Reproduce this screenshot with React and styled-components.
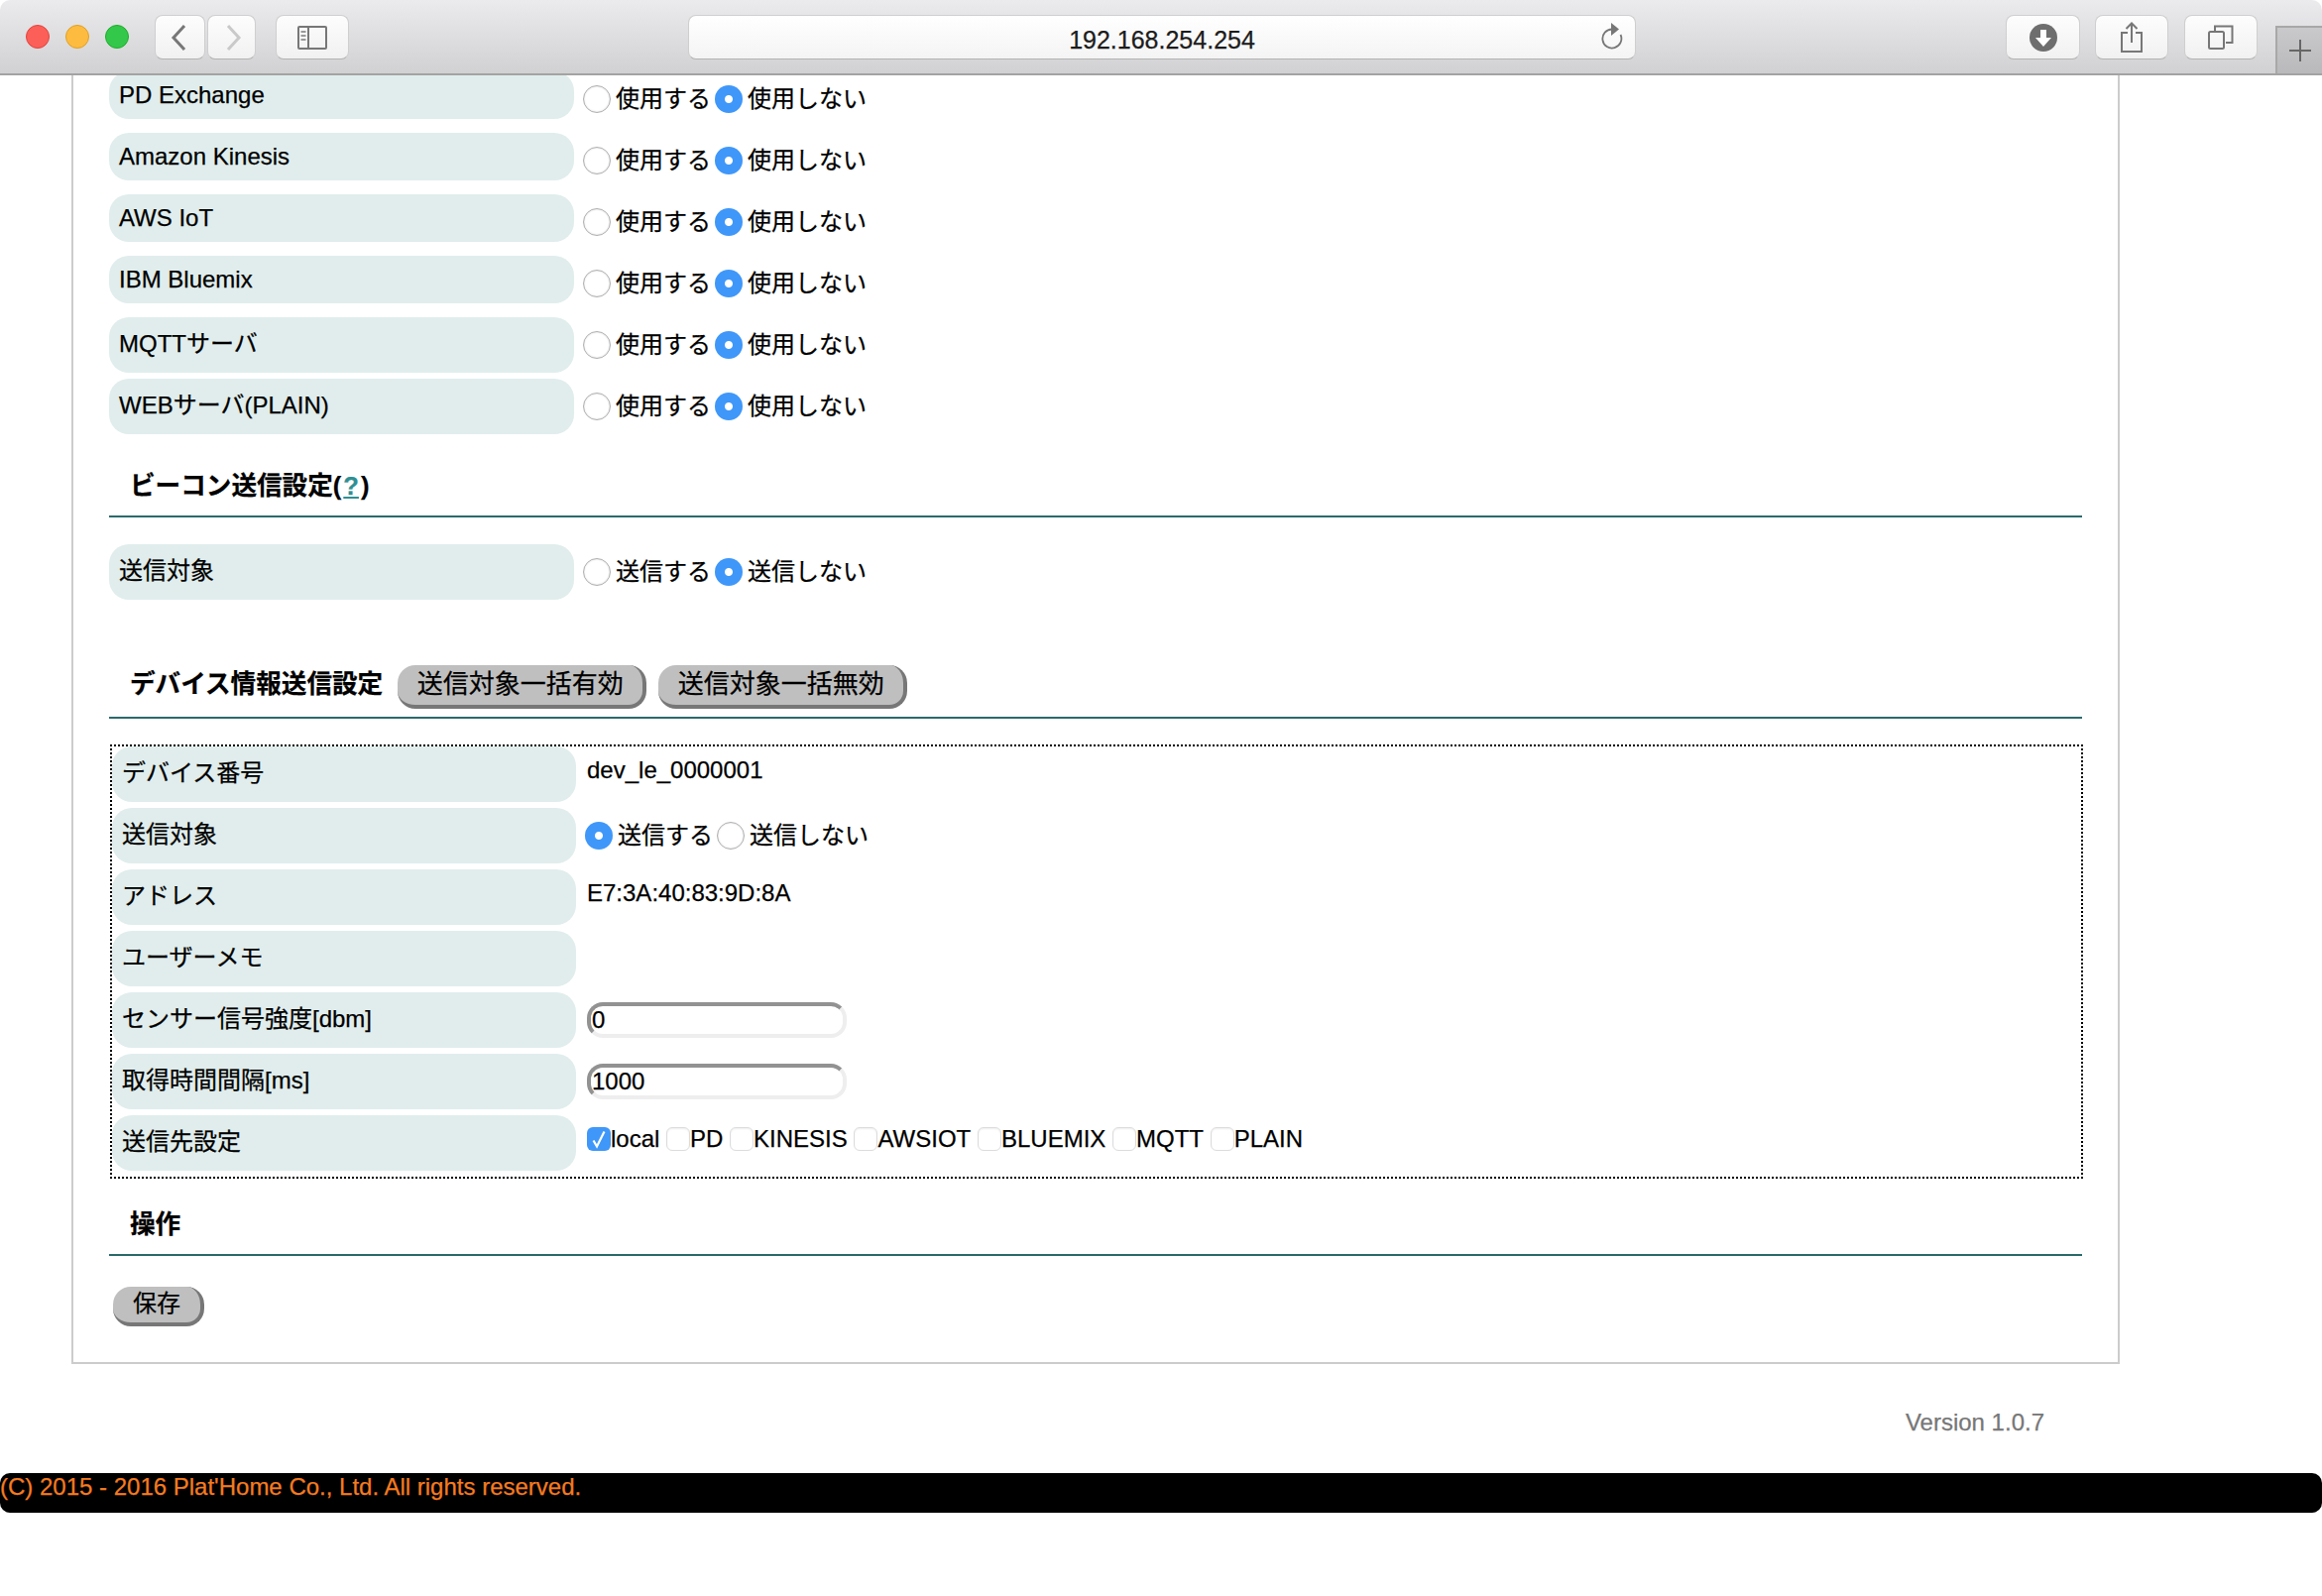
import React from 'react'
import styled, { createGlobalStyle } from 'styled-components'

const GlobalStyle = createGlobalStyle`
  html, body {
    margin: 0;
    padding: 0;
    background: #fff;
    font-family: "Liberation Sans", "Noto Sans CJK JP", sans-serif;
    font-size: 24px;
    color: #000;
    -webkit-text-stroke: 0.25px currentColor;
  }
`

const Window = styled.div`
  width: 2342px;
  height: 1610px;
  overflow: hidden;
  display: flex;
  flex-direction: column;
`

const TitleBar = styled.div`
  flex: none;
  box-sizing: border-box;
  height: 76px;
  border-bottom: 2px solid #a3a3a3;
  border-radius: 10px 10px 0 0;
  background: linear-gradient(#ebebed, #d1d1d3);
  display: flex;
  align-items: flex-start;
  padding: 15px 0 0 26px;
  position: relative;
  z-index: 1;
`

const Lights = styled.div`
  display: flex;
  gap: 16px;
  margin: 10px 26px 0 0;
`

const Light = styled.span`
  width: 24px;
  height: 24px;
  border-radius: 50%;
  box-sizing: border-box;
  background: ${(p) => p.$color};
  border: 1px solid ${(p) => p.$edge};
`

const BarButton = styled.div`
  flex: none;
  box-sizing: border-box;
  width: ${(p) => p.$w}px;
  height: 45px;
  margin-left: ${(p) => p.$ml || 0}px;
  border: 1px solid #cfcfd0;
  border-bottom-color: #b3b3b3;
  border-radius: 8px;
  background: linear-gradient(#fdfdfd, #f1f1f1);
  display: flex;
  align-items: center;
  justify-content: center;
`

const UrlBar = styled.div`
  flex: none;
  box-sizing: border-box;
  width: 956px;
  height: 45px;
  margin-left: 342px;
  border: 1px solid #cfcfd0;
  border-bottom-color: #b3b3b3;
  border-radius: 8px;
  background: linear-gradient(#ffffff, #f4f4f4);
  position: relative;
  text-align: center;
  line-height: 48px;
  font-size: 25px;
  color: #1c1c1c;
`

const ReloadIcon = styled.svg`
  position: absolute;
  right: 12px;
  top: 7px;
`

const NewTab = styled.div`
  position: absolute;
  right: 0;
  top: 26px;
  box-sizing: border-box;
  width: 47px;
  height: 48px;
  border: solid #a8a8a8;
  border-width: 2px 0 0 2px;
  background: linear-gradient(#c9c9cb, #b9b9bb);
  display: flex;
  align-items: center;
  justify-content: center;
`

const Page = styled.main`
  flex: 1;
  min-height: 0;
  overflow: hidden;
`

const Box = styled.div`
  box-sizing: border-box;
  width: 2066px;
  height: 1304px;
  margin: -4px 0 0 72px;
  padding: 0 36px;
  border: solid #cccccc;
  border-width: 0 2px 2px 2px;
`

const Row = styled.div`
  display: flex;
  align-items: flex-start;
  height: 62px;
`

const Label = styled.div`
  flex: none;
  box-sizing: border-box;
  width: ${(p) => p.$w || 469}px;
  height: ${(p) => p.$h || 56}px;
  padding: ${(p) => (p.$h === 48 ? 8 : 11)}px 0 0 10px;
  border-radius: 20px;
  background: #e0edec;
  line-height: 32px;
`

const Cell = styled.div`
  display: flex;
  align-items: center;
  height: 28px;
  margin: 14px 0 0 9px;
  white-space: nowrap;
`

const Radio = styled.span`
  flex: none;
  box-sizing: border-box;
  width: 28px;
  height: 28px;
  border-radius: 50%;
  margin-right: ${(p) => p.$mr}px;
  ${(p) =>
    p.$on
      ? `background: radial-gradient(circle, #fff 0 3.5px, #3f97f9 4.5px);`
      : `background: #fff; border: 1px solid #b0b0b0; box-shadow: inset 0 0 2px #ccc;`}
`

const Choice = styled.span`
  margin-right: ${(p) => p.$mr || 0}px;
  line-height: 28px;
`

const Heading = styled.h2`
  display: flex;
  align-items: flex-start;
  box-sizing: border-box;
  height: ${(p) => p.$h}px;
  margin: ${(p) => p.$mt}px 0 ${(p) => p.$mb}px;
  padding: ${(p) => p.$pt}px 0 0 21px;
  border-bottom: 2px solid #2b6a6b;
  font-size: 25.6px;
  font-weight: 700;
  line-height: 32px;
  white-space: nowrap;
`

const HeadingText = styled.span`
  margin-top: ${(p) => p.$mt || 0}px;
`

const Help = styled.a`
  color: #2f8f93;
  text-decoration: underline;
  margin: 0 2px;
`

const PillButton = styled.button`
  flex: none;
  box-sizing: border-box;
  height: ${(p) => p.$h}px;
  padding: 0 ${(p) => p.$px}px 2px;
  margin-left: ${(p) => p.$ml || 0}px;
  border: solid #777777;
  border-width: 0 4px 4px 0;
  border-radius: 18px;
  background: #bfbfbf;
  color: #000;
  font: inherit;
  font-size: ${(p) => p.$fs}px;
  font-weight: 400;
  line-height: 32px;
`

const Dotted = styled.div`
  box-sizing: border-box;
  width: 1990px;
  height: 438px;
  margin-left: 1px;
  border: 2px dotted #000;
`

const Value = styled.div`
  margin: 8px 0 0 11px;
  line-height: 32px;
`

const FieldInput = styled.input`
  box-sizing: border-box;
  width: 262px;
  height: 36px;
  margin: 10px 0 0 11px;
  padding: 0 2px 0 1px;
  border: 4px solid;
  border-color: #929292 #eeeeee #eeeeee #929292;
  border-radius: 16px;
  outline: none;
  background: #fff;
  color: #000;
  font: inherit;
`

const Boxes = styled.div`
  display: flex;
  align-items: center;
  height: 24px;
  margin: 12px 0 0 11px;
  white-space: nowrap;
`

const CheckBox = styled.span`
  flex: none;
  box-sizing: border-box;
  width: 24px;
  height: 24px;
  border-radius: 6px;
  display: flex;
  align-items: center;
  justify-content: center;
  ${(p) =>
    p.$on
      ? `background: #3f97f9;`
      : `background: #fff; border: 1px solid #dcdcdc; box-shadow: inset 0 1px 2px #eee;`}
`

const BoxText = styled.span`
  margin-right: 6.7px;
  line-height: 28px;
`

const Version = styled.div`
  width: 2062px;
  margin-top: 43px;
  text-align: right;
  color: #777777;
  line-height: 32px;
`

const Footer = styled.footer`
  box-sizing: border-box;
  height: 40px;
  margin-top: 35px;
  border-radius: 10px;
  background: #000;
  color: #f47b20;
  line-height: 28px;
`

const services = [
  { name: 'PD Exchange', h: 48 },
  { name: 'Amazon Kinesis', h: 48 },
  { name: 'AWS IoT', h: 48 },
  { name: 'IBM Bluemix', h: 48 },
  { name: 'MQTTサーバ', h: 56 },
  { name: 'WEBサーバ(PLAIN)', h: 56 },
]

const targets = [
  { name: 'local', on: true },
  { name: 'PD' },
  { name: 'KINESIS' },
  { name: 'AWSIOT' },
  { name: 'BLUEMIX' },
  { name: 'MQTT' },
  { name: 'PLAIN' },
]

const Pair = ({ yes, no, first }) => (
  <Cell>
    <Radio $on={first} $mr={5} />
    <Choice $mr={4}>{yes}</Choice>
    <Radio $on={!first} $mr={5} />
    <Choice>{no}</Choice>
  </Cell>
)

const App = () => (
  <Window>
    <GlobalStyle />
    <TitleBar>
      <Lights>
        <Light $color="#fc5f57" $edge="#e0443e" />
        <Light $color="#fdbc40" $edge="#dfa023" />
        <Light $color="#34c84a" $edge="#1dad2b" />
      </Lights>
      <BarButton $w={51}>
        <svg width="16" height="26" viewBox="0 0 16 26" fill="none" stroke="#777" strokeWidth="3" style={{ marginRight: 4 }}>
          <path d="M14 1L3 13l11 12" />
        </svg>
      </BarButton>
      <BarButton $w={49} $ml={2}>
        <svg width="16" height="26" viewBox="0 0 16 26" fill="none" stroke="#c9c9c9" strokeWidth="3" style={{ marginLeft: 4 }}>
          <path d="M2 1l11 12L2 25" />
        </svg>
      </BarButton>
      <BarButton $w={74} $ml={20}>
        <svg width="30" height="24" viewBox="0 0 30 24" fill="none" stroke="#777" strokeWidth="2">
          <rect x="1" y="1" width="28" height="22" rx="1" />
          <path d="M11 1v22" />
          <path d="M3.5 6h5M3.5 10h5M3.5 14h5" strokeWidth="1.8" stroke="#999" />
        </svg>
      </BarButton>
      <UrlBar>
        192.168.254.254
        <ReloadIcon width="24" height="30" viewBox="0 0 24 30" fill="none">
          <path d="M13 6.5a9.5 9.5 0 1 0 8.5 5.5" stroke="#777" strokeWidth="1.8" />
          <path d="M12 0l8 6.5-8 6.5z" fill="#777" />
        </ReloadIcon>
      </UrlBar>
      <BarButton $w={75} $ml={373}>
        <svg width="28" height="28" viewBox="0 0 28 28">
          <circle cx="14" cy="14" r="14" fill="#6e6e6e" />
          <path d="M11 6h6v8h5l-8 9-8-9h5z" fill="#fff" />
        </svg>
      </BarButton>
      <BarButton $w={74} $ml={15}>
        <svg width="24" height="32" viewBox="0 0 24 32" fill="none" stroke="#777" strokeWidth="2">
          <path d="M8 11H2v19h20V11h-6" />
          <path d="M12 21V2M6.5 7L12 1.5 17.5 7" />
        </svg>
      </BarButton>
      <BarButton $w={74} $ml={16}>
        <svg width="26" height="26" viewBox="0 0 26 26" fill="none" stroke="#777" strokeWidth="2">
          <rect x="1" y="7" width="15" height="17" rx="1.5" />
          <path d="M7 6V1.5h17.5V18H18" />
        </svg>
      </BarButton>
      <NewTab>
        <svg width="24" height="24" viewBox="0 0 24 24" stroke="#666" strokeWidth="2">
          <path d="M12 1v22M1 12h22" />
        </svg>
      </NewTab>
    </TitleBar>
    <Page>
      <Box>
        {services.map((s) => (
          <Row key={s.name}>
            <Label $h={s.h}>{s.name}</Label>
            <Pair yes="使用する" no="使用しない" />
          </Row>
        ))}
        <Heading $h={78} $mt={0} $mb={27} $pt={30}>
          ビーコン送信設定(<Help>?</Help>)
        </Heading>
        <Row>
          <Label>送信対象</Label>
          <Pair yes="送信する" no="送信しない" />
        </Row>
        <Heading $h={57} $mt={57} $mb={26} $pt={3}>
          <HeadingText $mt={3}>デバイス情報送信設定</HeadingText>
          <PillButton $h={44} $px={19.5} $fs={26} $ml={15}>送信対象一括有効</PillButton>
          <PillButton $h={44} $px={19.5} $fs={26} $ml={12}>送信対象一括無効</PillButton>
        </Heading>
        <Dotted>
          <Row>
            <Label $w={468}>デバイス番号</Label>
            <Value>dev_le_0000001</Value>
          </Row>
          <Row>
            <Label $w={468}>送信対象</Label>
            <Pair yes="送信する" no="送信しない" first />
          </Row>
          <Row>
            <Label $w={468}>アドレス</Label>
            <Value>E7:3A:40:83:9D:8A</Value>
          </Row>
          <Row>
            <Label $w={468}>ユーザーメモ</Label>
          </Row>
          <Row>
            <Label $w={468}>センサー信号強度[dbm]</Label>
            <FieldInput defaultValue="0" />
          </Row>
          <Row>
            <Label $w={468}>取得時間間隔[ms]</Label>
            <FieldInput defaultValue="1000" />
          </Row>
          <Row>
            <Label $w={468}>送信先設定</Label>
            <Boxes>
              {targets.map((t) => (
                <React.Fragment key={t.name}>
                  <CheckBox $on={t.on}>
                    {t.on && (
                      <svg width="16" height="20" viewBox="0 0 16 20" fill="none" stroke="#fff" strokeWidth="2.2">
                        <path d="M2.5 11.5L6 17.5 13.5 2.5" />
                      </svg>
                    )}
                  </CheckBox>
                  <BoxText>{t.name}</BoxText>
                </React.Fragment>
              ))}
            </Boxes>
          </Row>
        </Dotted>
        <Heading $h={78} $mt={0} $mb={31} $pt={30}>
          操作
        </Heading>
        <PillButton $h={40} $px={20} $fs={24} $ml={4}>保存</PillButton>
      </Box>
      <Version>Version 1.0.7</Version>
      <Footer>(C) 2015 - 2016 Plat'Home Co., Ltd. All rights reserved.</Footer>
    </Page>
  </Window>
)

export default App
